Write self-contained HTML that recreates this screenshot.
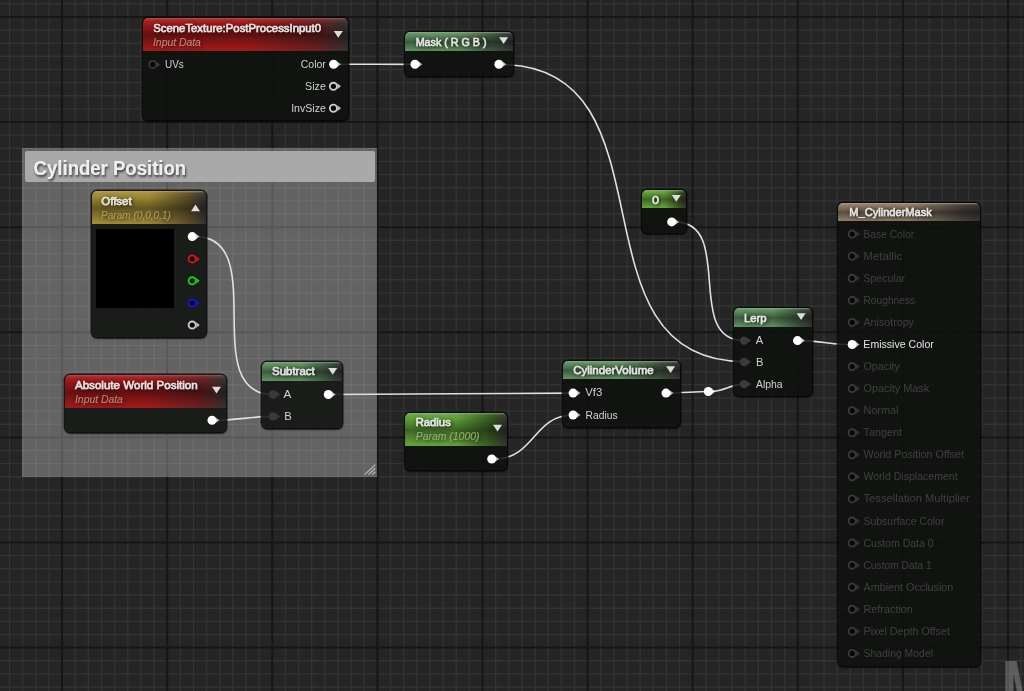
<!DOCTYPE html>
<html><head><meta charset="utf-8"><style>
html,body{margin:0;padding:0;width:1024px;height:691px;overflow:hidden;background:#252525;}
.layer{position:absolute;left:0;top:0;width:1024px;height:691px;}
.node{position:absolute;background:rgba(13,16,13,0.86);border-radius:5px;box-shadow:0 0 0 1.4px rgba(6,6,6,0.8),0.5px 1.5px 2px rgba(0,0,0,0.5);overflow:hidden;}
.hdr{position:absolute;left:0;top:0;right:0;}
.comment{position:absolute;left:22.4px;top:148.3px;width:354.5px;height:328.5px;background:rgba(255,255,255,0.285);}
.ctitle{position:absolute;left:2.5px;top:2.6px;right:1.6px;height:30.8px;background:#a9a9a9;border-radius:2px;}
svg text{font-family:"Liberation Sans",sans-serif;}
.tl{will-change:transform;}
</style></head><body>
<svg class="layer" width="1024" height="691" viewBox="0 0 1024 691">
<rect width="1024" height="691" fill="#252525"/>
<line x1="9.55" y1="0" x2="9.55" y2="691" stroke="#333333" stroke-width="1.4"/>
<line x1="22.69" y1="0" x2="22.69" y2="691" stroke="#333333" stroke-width="1.4"/>
<line x1="35.83" y1="0" x2="35.83" y2="691" stroke="#333333" stroke-width="1.4"/>
<line x1="48.96" y1="0" x2="48.96" y2="691" stroke="#333333" stroke-width="1.4"/>
<line x1="75.24" y1="0" x2="75.24" y2="691" stroke="#333333" stroke-width="1.4"/>
<line x1="88.38" y1="0" x2="88.38" y2="691" stroke="#333333" stroke-width="1.4"/>
<line x1="101.51" y1="0" x2="101.51" y2="691" stroke="#333333" stroke-width="1.4"/>
<line x1="114.65" y1="0" x2="114.65" y2="691" stroke="#333333" stroke-width="1.4"/>
<line x1="127.79" y1="0" x2="127.79" y2="691" stroke="#333333" stroke-width="1.4"/>
<line x1="140.92" y1="0" x2="140.92" y2="691" stroke="#333333" stroke-width="1.4"/>
<line x1="154.06" y1="0" x2="154.06" y2="691" stroke="#333333" stroke-width="1.4"/>
<line x1="180.34" y1="0" x2="180.34" y2="691" stroke="#333333" stroke-width="1.4"/>
<line x1="193.47" y1="0" x2="193.47" y2="691" stroke="#333333" stroke-width="1.4"/>
<line x1="206.61" y1="0" x2="206.61" y2="691" stroke="#333333" stroke-width="1.4"/>
<line x1="219.75" y1="0" x2="219.75" y2="691" stroke="#333333" stroke-width="1.4"/>
<line x1="232.89" y1="0" x2="232.89" y2="691" stroke="#333333" stroke-width="1.4"/>
<line x1="246.02" y1="0" x2="246.02" y2="691" stroke="#333333" stroke-width="1.4"/>
<line x1="259.16" y1="0" x2="259.16" y2="691" stroke="#333333" stroke-width="1.4"/>
<line x1="285.44" y1="0" x2="285.44" y2="691" stroke="#333333" stroke-width="1.4"/>
<line x1="298.57" y1="0" x2="298.57" y2="691" stroke="#333333" stroke-width="1.4"/>
<line x1="311.71" y1="0" x2="311.71" y2="691" stroke="#333333" stroke-width="1.4"/>
<line x1="324.85" y1="0" x2="324.85" y2="691" stroke="#333333" stroke-width="1.4"/>
<line x1="337.99" y1="0" x2="337.99" y2="691" stroke="#333333" stroke-width="1.4"/>
<line x1="351.12" y1="0" x2="351.12" y2="691" stroke="#333333" stroke-width="1.4"/>
<line x1="364.26" y1="0" x2="364.26" y2="691" stroke="#333333" stroke-width="1.4"/>
<line x1="390.54" y1="0" x2="390.54" y2="691" stroke="#333333" stroke-width="1.4"/>
<line x1="403.68" y1="0" x2="403.68" y2="691" stroke="#333333" stroke-width="1.4"/>
<line x1="416.81" y1="0" x2="416.81" y2="691" stroke="#333333" stroke-width="1.4"/>
<line x1="429.95" y1="0" x2="429.95" y2="691" stroke="#333333" stroke-width="1.4"/>
<line x1="443.09" y1="0" x2="443.09" y2="691" stroke="#333333" stroke-width="1.4"/>
<line x1="456.23" y1="0" x2="456.23" y2="691" stroke="#333333" stroke-width="1.4"/>
<line x1="469.36" y1="0" x2="469.36" y2="691" stroke="#333333" stroke-width="1.4"/>
<line x1="495.64" y1="0" x2="495.64" y2="691" stroke="#333333" stroke-width="1.4"/>
<line x1="508.77" y1="0" x2="508.77" y2="691" stroke="#333333" stroke-width="1.4"/>
<line x1="521.91" y1="0" x2="521.91" y2="691" stroke="#333333" stroke-width="1.4"/>
<line x1="535.05" y1="0" x2="535.05" y2="691" stroke="#333333" stroke-width="1.4"/>
<line x1="548.19" y1="0" x2="548.19" y2="691" stroke="#333333" stroke-width="1.4"/>
<line x1="561.32" y1="0" x2="561.32" y2="691" stroke="#333333" stroke-width="1.4"/>
<line x1="574.46" y1="0" x2="574.46" y2="691" stroke="#333333" stroke-width="1.4"/>
<line x1="600.74" y1="0" x2="600.74" y2="691" stroke="#333333" stroke-width="1.4"/>
<line x1="613.88" y1="0" x2="613.88" y2="691" stroke="#333333" stroke-width="1.4"/>
<line x1="627.01" y1="0" x2="627.01" y2="691" stroke="#333333" stroke-width="1.4"/>
<line x1="640.15" y1="0" x2="640.15" y2="691" stroke="#333333" stroke-width="1.4"/>
<line x1="653.29" y1="0" x2="653.29" y2="691" stroke="#333333" stroke-width="1.4"/>
<line x1="666.42" y1="0" x2="666.42" y2="691" stroke="#333333" stroke-width="1.4"/>
<line x1="679.56" y1="0" x2="679.56" y2="691" stroke="#333333" stroke-width="1.4"/>
<line x1="705.84" y1="0" x2="705.84" y2="691" stroke="#333333" stroke-width="1.4"/>
<line x1="718.98" y1="0" x2="718.98" y2="691" stroke="#333333" stroke-width="1.4"/>
<line x1="732.11" y1="0" x2="732.11" y2="691" stroke="#333333" stroke-width="1.4"/>
<line x1="745.25" y1="0" x2="745.25" y2="691" stroke="#333333" stroke-width="1.4"/>
<line x1="758.39" y1="0" x2="758.39" y2="691" stroke="#333333" stroke-width="1.4"/>
<line x1="771.52" y1="0" x2="771.52" y2="691" stroke="#333333" stroke-width="1.4"/>
<line x1="784.66" y1="0" x2="784.66" y2="691" stroke="#333333" stroke-width="1.4"/>
<line x1="810.94" y1="0" x2="810.94" y2="691" stroke="#333333" stroke-width="1.4"/>
<line x1="824.07" y1="0" x2="824.07" y2="691" stroke="#333333" stroke-width="1.4"/>
<line x1="837.21" y1="0" x2="837.21" y2="691" stroke="#333333" stroke-width="1.4"/>
<line x1="850.35" y1="0" x2="850.35" y2="691" stroke="#333333" stroke-width="1.4"/>
<line x1="863.49" y1="0" x2="863.49" y2="691" stroke="#333333" stroke-width="1.4"/>
<line x1="876.62" y1="0" x2="876.62" y2="691" stroke="#333333" stroke-width="1.4"/>
<line x1="889.76" y1="0" x2="889.76" y2="691" stroke="#333333" stroke-width="1.4"/>
<line x1="916.04" y1="0" x2="916.04" y2="691" stroke="#333333" stroke-width="1.4"/>
<line x1="929.17" y1="0" x2="929.17" y2="691" stroke="#333333" stroke-width="1.4"/>
<line x1="942.31" y1="0" x2="942.31" y2="691" stroke="#333333" stroke-width="1.4"/>
<line x1="955.45" y1="0" x2="955.45" y2="691" stroke="#333333" stroke-width="1.4"/>
<line x1="968.59" y1="0" x2="968.59" y2="691" stroke="#333333" stroke-width="1.4"/>
<line x1="981.73" y1="0" x2="981.73" y2="691" stroke="#333333" stroke-width="1.4"/>
<line x1="994.86" y1="0" x2="994.86" y2="691" stroke="#333333" stroke-width="1.4"/>
<line x1="1021.14" y1="0" x2="1021.14" y2="691" stroke="#333333" stroke-width="1.4"/>
<line x1="0" y1="3.76" x2="1024" y2="3.76" stroke="#333333" stroke-width="1.4"/>
<line x1="0" y1="30.04" x2="1024" y2="30.04" stroke="#333333" stroke-width="1.4"/>
<line x1="0" y1="43.18" x2="1024" y2="43.18" stroke="#333333" stroke-width="1.4"/>
<line x1="0" y1="56.32" x2="1024" y2="56.32" stroke="#333333" stroke-width="1.4"/>
<line x1="0" y1="69.46" x2="1024" y2="69.46" stroke="#333333" stroke-width="1.4"/>
<line x1="0" y1="82.60" x2="1024" y2="82.60" stroke="#333333" stroke-width="1.4"/>
<line x1="0" y1="95.74" x2="1024" y2="95.74" stroke="#333333" stroke-width="1.4"/>
<line x1="0" y1="108.88" x2="1024" y2="108.88" stroke="#333333" stroke-width="1.4"/>
<line x1="0" y1="135.16" x2="1024" y2="135.16" stroke="#333333" stroke-width="1.4"/>
<line x1="0" y1="148.30" x2="1024" y2="148.30" stroke="#333333" stroke-width="1.4"/>
<line x1="0" y1="161.44" x2="1024" y2="161.44" stroke="#333333" stroke-width="1.4"/>
<line x1="0" y1="174.58" x2="1024" y2="174.58" stroke="#333333" stroke-width="1.4"/>
<line x1="0" y1="187.72" x2="1024" y2="187.72" stroke="#333333" stroke-width="1.4"/>
<line x1="0" y1="200.86" x2="1024" y2="200.86" stroke="#333333" stroke-width="1.4"/>
<line x1="0" y1="214.00" x2="1024" y2="214.00" stroke="#333333" stroke-width="1.4"/>
<line x1="0" y1="240.28" x2="1024" y2="240.28" stroke="#333333" stroke-width="1.4"/>
<line x1="0" y1="253.42" x2="1024" y2="253.42" stroke="#333333" stroke-width="1.4"/>
<line x1="0" y1="266.56" x2="1024" y2="266.56" stroke="#333333" stroke-width="1.4"/>
<line x1="0" y1="279.70" x2="1024" y2="279.70" stroke="#333333" stroke-width="1.4"/>
<line x1="0" y1="292.84" x2="1024" y2="292.84" stroke="#333333" stroke-width="1.4"/>
<line x1="0" y1="305.98" x2="1024" y2="305.98" stroke="#333333" stroke-width="1.4"/>
<line x1="0" y1="319.12" x2="1024" y2="319.12" stroke="#333333" stroke-width="1.4"/>
<line x1="0" y1="345.40" x2="1024" y2="345.40" stroke="#333333" stroke-width="1.4"/>
<line x1="0" y1="358.54" x2="1024" y2="358.54" stroke="#333333" stroke-width="1.4"/>
<line x1="0" y1="371.68" x2="1024" y2="371.68" stroke="#333333" stroke-width="1.4"/>
<line x1="0" y1="384.82" x2="1024" y2="384.82" stroke="#333333" stroke-width="1.4"/>
<line x1="0" y1="397.96" x2="1024" y2="397.96" stroke="#333333" stroke-width="1.4"/>
<line x1="0" y1="411.10" x2="1024" y2="411.10" stroke="#333333" stroke-width="1.4"/>
<line x1="0" y1="424.24" x2="1024" y2="424.24" stroke="#333333" stroke-width="1.4"/>
<line x1="0" y1="450.52" x2="1024" y2="450.52" stroke="#333333" stroke-width="1.4"/>
<line x1="0" y1="463.66" x2="1024" y2="463.66" stroke="#333333" stroke-width="1.4"/>
<line x1="0" y1="476.80" x2="1024" y2="476.80" stroke="#333333" stroke-width="1.4"/>
<line x1="0" y1="489.94" x2="1024" y2="489.94" stroke="#333333" stroke-width="1.4"/>
<line x1="0" y1="503.08" x2="1024" y2="503.08" stroke="#333333" stroke-width="1.4"/>
<line x1="0" y1="516.22" x2="1024" y2="516.22" stroke="#333333" stroke-width="1.4"/>
<line x1="0" y1="529.36" x2="1024" y2="529.36" stroke="#333333" stroke-width="1.4"/>
<line x1="0" y1="555.64" x2="1024" y2="555.64" stroke="#333333" stroke-width="1.4"/>
<line x1="0" y1="568.78" x2="1024" y2="568.78" stroke="#333333" stroke-width="1.4"/>
<line x1="0" y1="581.92" x2="1024" y2="581.92" stroke="#333333" stroke-width="1.4"/>
<line x1="0" y1="595.06" x2="1024" y2="595.06" stroke="#333333" stroke-width="1.4"/>
<line x1="0" y1="608.20" x2="1024" y2="608.20" stroke="#333333" stroke-width="1.4"/>
<line x1="0" y1="621.34" x2="1024" y2="621.34" stroke="#333333" stroke-width="1.4"/>
<line x1="0" y1="634.48" x2="1024" y2="634.48" stroke="#333333" stroke-width="1.4"/>
<line x1="0" y1="660.76" x2="1024" y2="660.76" stroke="#333333" stroke-width="1.4"/>
<line x1="0" y1="673.90" x2="1024" y2="673.90" stroke="#333333" stroke-width="1.4"/>
<line x1="0" y1="687.04" x2="1024" y2="687.04" stroke="#333333" stroke-width="1.4"/>
<line x1="62.10" y1="0" x2="62.10" y2="691" stroke="#161616" stroke-width="2"/>
<line x1="167.20" y1="0" x2="167.20" y2="691" stroke="#161616" stroke-width="2"/>
<line x1="272.30" y1="0" x2="272.30" y2="691" stroke="#161616" stroke-width="2"/>
<line x1="377.40" y1="0" x2="377.40" y2="691" stroke="#161616" stroke-width="2"/>
<line x1="482.50" y1="0" x2="482.50" y2="691" stroke="#161616" stroke-width="2"/>
<line x1="587.60" y1="0" x2="587.60" y2="691" stroke="#161616" stroke-width="2"/>
<line x1="692.70" y1="0" x2="692.70" y2="691" stroke="#161616" stroke-width="2"/>
<line x1="797.80" y1="0" x2="797.80" y2="691" stroke="#161616" stroke-width="2"/>
<line x1="902.90" y1="0" x2="902.90" y2="691" stroke="#161616" stroke-width="2"/>
<line x1="1008.00" y1="0" x2="1008.00" y2="691" stroke="#161616" stroke-width="2"/>
<line x1="0" y1="16.90" x2="1024" y2="16.90" stroke="#161616" stroke-width="2"/>
<line x1="0" y1="122.02" x2="1024" y2="122.02" stroke="#161616" stroke-width="2"/>
<line x1="0" y1="227.14" x2="1024" y2="227.14" stroke="#161616" stroke-width="2"/>
<line x1="0" y1="332.26" x2="1024" y2="332.26" stroke="#161616" stroke-width="2"/>
<line x1="0" y1="437.38" x2="1024" y2="437.38" stroke="#161616" stroke-width="2"/>
<line x1="0" y1="542.50" x2="1024" y2="542.50" stroke="#161616" stroke-width="2"/>
<line x1="0" y1="647.62" x2="1024" y2="647.62" stroke="#161616" stroke-width="2"/>
</svg>
<div class="comment"><div class="ctitle"></div></div>
<svg class="layer tl" width="1024" height="691" viewBox="0 0 1024 691">
<defs>
<filter id="csh" x="-10%" y="-30%" width="120%" height="160%"><feGaussianBlur in="SourceAlpha" stdDeviation="0.8"/><feOffset dx="1.4" dy="1.6" result="o"/><feFlood flood-color="#202020" flood-opacity="0.8"/><feComposite in2="o" operator="in"/><feMerge><feMergeNode/><feMergeNode in="SourceGraphic"/></feMerge></filter>
</defs>
<text x="33.6" y="174.7" font-size="19.6" font-weight="bold" fill="#efefef" textLength="152.6" lengthAdjust="spacingAndGlyphs" filter="url(#csh)">Cylinder Position</text>
<path d="M364.6,474.6 L375.3,464.6 M368.4,474.6 L375.3,468.2 M372.2,474.6 L375.3,471.7" stroke="#bcbcbc" stroke-width="1.2"/>
<g fill="none" stroke="#e0e0e0" stroke-width="1.6">
<path d="M336.9,64.2 C362.3,64.2 389.8,64.4 415.2,64.4"/><path d="M501.0,64.6 C681.0,64.6 564.0,361.6 744.0,361.6"/><path d="M674.7,221.9 C735.5,221.9 683.2,340.6 744.0,340.6"/><path d="M195.2,236.6 C271.4,236.6 196.8,394.5 273.0,394.5"/><path d="M215.0,420.3 C235.0,420.3 253.0,416.4 273.0,416.4"/><path d="M331.3,394.5 C409.9,394.5 494.5,393.1 573.1,393.1"/><path d="M494.7,459.0 C534.3,459.0 533.5,415.0 573.1,415.0"/><path d="M669.0,393.1 C682.2,393.1 695.1,391.5 708.3,391.5"/><path d="M711.3,391.5 C724.3,391.5 731.0,384.1 744.0,384.1"/><path d="M800.5,340.6 C818.6,340.6 834.1,344.9 852.2,344.9"/>
</g>
</svg>
<div class="layer">
<div class="node" style="left:142.5px;top:18.3px;width:205.8px;height:101.7px"><div class="hdr" style="height:33.2px;box-shadow:inset 0 1.3px 0 #c8585880;background:linear-gradient(180deg,rgba(255,255,255,0.1) 0,rgba(0,0,0,0) 16%,rgba(0,0,0,0.36) 52%,rgba(0,0,0,0.16) 76%,rgba(0,0,0,0) 94%),linear-gradient(90deg,#a01a1a 0%,#a01a1a 50%,#662020 86%,#323232 100%)"></div></div><div class="node" style="left:405.2px;top:31.6px;width:108.1px;height:44.0px"><div class="hdr" style="height:19.4px;box-shadow:inset 0 1.3px 0 #90b09080;background:linear-gradient(180deg,rgba(255,255,255,0.1) 0,rgba(0,0,0,0) 16%,rgba(0,0,0,0.36) 52%,rgba(0,0,0,0.16) 76%,rgba(0,0,0,0) 94%),linear-gradient(90deg,#5f8e5f 0%,#5f8e5f 50%,#3a4a3a 86%,#323232 100%)"></div></div><div class="node" style="left:91.8px;top:190.9px;width:114.7px;height:146.3px"><div class="hdr" style="height:33.5px;box-shadow:inset 0 1.3px 0 #c8b07080;background:linear-gradient(180deg,rgba(255,255,255,0.1) 0,rgba(0,0,0,0) 16%,rgba(0,0,0,0.36) 52%,rgba(0,0,0,0.16) 76%,rgba(0,0,0,0) 94%),linear-gradient(90deg,#a08a34 0%,#a08a34 50%,#584a26 86%,#323232 100%)"></div><div style="position:absolute;left:4.1px;top:38.1px;width:78.5px;height:79.1px;background:#000"></div></div><div class="node" style="left:65.2px;top:374.8px;width:161.2px;height:57.7px"><div class="hdr" style="height:33.5px;box-shadow:inset 0 1.3px 0 #c8585880;background:linear-gradient(180deg,rgba(255,255,255,0.1) 0,rgba(0,0,0,0) 16%,rgba(0,0,0,0.36) 52%,rgba(0,0,0,0.16) 76%,rgba(0,0,0,0) 94%),linear-gradient(90deg,#a01a1a 0%,#a01a1a 50%,#662020 86%,#323232 100%)"></div></div><div class="node" style="left:261.8px;top:361.9px;width:80.5px;height:66.4px"><div class="hdr" style="height:19.1px;box-shadow:inset 0 1.3px 0 #90b09080;background:linear-gradient(180deg,rgba(255,255,255,0.1) 0,rgba(0,0,0,0) 16%,rgba(0,0,0,0.36) 52%,rgba(0,0,0,0.16) 76%,rgba(0,0,0,0) 94%),linear-gradient(90deg,#5f8e5f 0%,#5f8e5f 50%,#3a4a3a 86%,#323232 100%)"></div></div><div class="node" style="left:405.4px;top:412.8px;width:101.5px;height:57.3px"><div class="hdr" style="height:33.3px;box-shadow:inset 0 1.3px 0 #90c07080;background:linear-gradient(180deg,rgba(255,255,255,0.1) 0,rgba(0,0,0,0) 16%,rgba(0,0,0,0.36) 52%,rgba(0,0,0,0.16) 76%,rgba(0,0,0,0) 94%),linear-gradient(90deg,#62a03a 0%,#62a03a 50%,#33541f 86%,#323232 100%)"></div></div><div class="node" style="left:562.5px;top:360.6px;width:117.5px;height:66.2px"><div class="hdr" style="height:18.7px;box-shadow:inset 0 1.3px 0 #90b09080;background:linear-gradient(180deg,rgba(255,255,255,0.1) 0,rgba(0,0,0,0) 16%,rgba(0,0,0,0.36) 52%,rgba(0,0,0,0.16) 76%,rgba(0,0,0,0) 94%),linear-gradient(90deg,#5f8e5f 0%,#5f8e5f 50%,#3a4a3a 86%,#323232 100%)"></div></div><div class="node" style="left:642.0px;top:190.2px;width:43.7px;height:43.3px"><div class="hdr" style="height:18.1px;box-shadow:inset 0 1.3px 0 #90c07080;background:linear-gradient(180deg,rgba(255,255,255,0.1) 0,rgba(0,0,0,0) 16%,rgba(0,0,0,0.36) 52%,rgba(0,0,0,0.16) 76%,rgba(0,0,0,0) 94%),linear-gradient(90deg,#62a03a 0%,#62a03a 50%,#33541f 86%,#323232 100%)"></div></div><div class="node" style="left:733.7px;top:308.3px;width:78.4px;height:87.7px"><div class="hdr" style="height:18.4px;box-shadow:inset 0 1.3px 0 #90b09080;background:linear-gradient(180deg,rgba(255,255,255,0.1) 0,rgba(0,0,0,0) 16%,rgba(0,0,0,0.36) 52%,rgba(0,0,0,0.16) 76%,rgba(0,0,0,0) 94%),linear-gradient(90deg,#5f8e5f 0%,#5f8e5f 50%,#3a4a3a 86%,#323232 100%)"></div></div><div class="node" style="left:838.0px;top:202.6px;width:141.5px;height:463.4px"><div class="hdr" style="height:18.2px;box-shadow:inset 0 1.3px 0 #b8a89880;background:linear-gradient(180deg,rgba(255,255,255,0.1) 0,rgba(0,0,0,0) 16%,rgba(0,0,0,0.36) 52%,rgba(0,0,0,0.16) 76%,rgba(0,0,0,0) 94%),linear-gradient(90deg,#8c7a66 0%,#8c7a66 50%,#48403a 86%,#323232 100%)"></div></div>
</div>
<svg class="layer tl" width="1024" height="691" viewBox="0 0 1024 691">
<defs>
<filter id="tsh" x="-20%" y="-60%" width="140%" height="220%"><feGaussianBlur in="SourceAlpha" stdDeviation="2.2"/><feOffset dx="0.5" dy="1" result="o"/><feFlood flood-color="#000" flood-opacity="0.8"/><feComposite in2="o" operator="in"/><feMerge><feMergeNode/><feMergeNode in="SourceGraphic"/></feMerge></filter>
</defs>
<circle cx="152.7" cy="64.4" r="3.55" fill="#070707" stroke="#383838" stroke-width="1.9"/><path d="M156.79999999999998,61.400000000000006 L160.29999999999998,64.4 L156.79999999999998,67.4Z" fill="#383838" opacity="0.9"/><circle cx="333.6" cy="64.2" r="4.5" fill="#ffffff"/><path d="M337.20000000000005,61.400000000000006 L341.0,64.2 L337.20000000000005,67.0Z" fill="#ffffff" opacity="0.7"/><circle cx="333.4" cy="86.3" r="3.55" fill="#070707" stroke="#cccccc" stroke-width="1.9"/><path d="M337.5,83.3 L341.0,86.3 L337.5,89.3Z" fill="#cccccc" opacity="0.9"/><circle cx="333.4" cy="108.2" r="3.55" fill="#070707" stroke="#cccccc" stroke-width="1.9"/><path d="M337.5,105.2 L341.0,108.2 L337.5,111.2Z" fill="#cccccc" opacity="0.9"/><circle cx="415.0" cy="64.3" r="4.5" fill="#ffffff"/><path d="M418.6,61.5 L422.4,64.3 L418.6,67.1Z" fill="#ffffff" opacity="0.7"/><circle cx="498.9" cy="64.2" r="4.5" fill="#ffffff"/><path d="M502.5,61.400000000000006 L506.29999999999995,64.2 L502.5,67.0Z" fill="#ffffff" opacity="0.7"/><circle cx="192.2" cy="236.6" r="4.5" fill="#ffffff"/><path d="M195.79999999999998,233.79999999999998 L199.6,236.6 L195.79999999999998,239.4Z" fill="#ffffff" opacity="0.7"/><circle cx="192.2" cy="258.9" r="3.55" fill="#070707" stroke="#e01414" stroke-width="1.9"/><path d="M196.29999999999998,255.89999999999998 L199.79999999999998,258.9 L196.29999999999998,261.9Z" fill="#e01414" opacity="0.9"/><circle cx="192.2" cy="280.8" r="3.55" fill="#070707" stroke="#14d414" stroke-width="1.9"/><path d="M196.29999999999998,277.8 L199.79999999999998,280.8 L196.29999999999998,283.8Z" fill="#14d414" opacity="0.9"/><circle cx="192.2" cy="303.0" r="3.55" fill="#070707" stroke="#1414e0" stroke-width="1.9"/><path d="M196.29999999999998,300.0 L199.79999999999998,303.0 L196.29999999999998,306.0Z" fill="#1414e0" opacity="0.9"/><circle cx="192.2" cy="325.0" r="3.55" fill="#070707" stroke="#c8c8c8" stroke-width="1.9"/><path d="M196.29999999999998,322.0 L199.79999999999998,325.0 L196.29999999999998,328.0Z" fill="#c8c8c8" opacity="0.9"/><circle cx="212.0" cy="420.3" r="4.5" fill="#ffffff"/><path d="M215.6,417.5 L219.4,420.3 L215.6,423.1Z" fill="#ffffff" opacity="0.7"/><circle cx="273.0" cy="394.5" r="4.2" fill="#3a3a3a"/><path d="M276.0,391.5 L280.2,394.5 L276.0,397.5Z" fill="#3a3a3a"/><circle cx="273.0" cy="416.4" r="4.2" fill="#3a3a3a"/><path d="M276.0,413.4 L280.2,416.4 L276.0,419.4Z" fill="#3a3a3a"/><circle cx="328.3" cy="394.5" r="4.5" fill="#ffffff"/><path d="M331.90000000000003,391.7 L335.7,394.5 L331.90000000000003,397.3Z" fill="#ffffff" opacity="0.7"/><circle cx="491.7" cy="459.0" r="4.5" fill="#ffffff"/><path d="M495.3,456.2 L499.09999999999997,459.0 L495.3,461.8Z" fill="#ffffff" opacity="0.7"/><circle cx="573.1" cy="393.1" r="4.5" fill="#ffffff"/><path d="M576.7,390.3 L580.5,393.1 L576.7,395.90000000000003Z" fill="#ffffff" opacity="0.7"/><circle cx="573.1" cy="415.0" r="4.5" fill="#ffffff"/><path d="M576.7,412.2 L580.5,415.0 L576.7,417.8Z" fill="#ffffff" opacity="0.7"/><circle cx="666.0" cy="393.1" r="4.5" fill="#ffffff"/><path d="M669.6,390.3 L673.4,393.1 L669.6,395.90000000000003Z" fill="#ffffff" opacity="0.7"/><circle cx="671.7" cy="221.9" r="4.5" fill="#ffffff"/><path d="M675.3000000000001,219.1 L679.1,221.9 L675.3000000000001,224.70000000000002Z" fill="#ffffff" opacity="0.7"/><circle cx="744.0" cy="340.6" r="4.2" fill="#3a3a3a"/><path d="M747.0,337.6 L751.2,340.6 L747.0,343.6Z" fill="#3a3a3a"/><circle cx="744.0" cy="362.0" r="4.2" fill="#3a3a3a"/><path d="M747.0,359.0 L751.2,362.0 L747.0,365.0Z" fill="#3a3a3a"/><circle cx="744.0" cy="384.1" r="4.2" fill="#3a3a3a"/><path d="M747.0,381.1 L751.2,384.1 L747.0,387.1Z" fill="#3a3a3a"/><circle cx="797.5" cy="340.6" r="4.5" fill="#ffffff"/><path d="M801.1,337.8 L804.9,340.6 L801.1,343.40000000000003Z" fill="#ffffff" opacity="0.7"/><circle cx="852.2" cy="234.1" r="3.55" fill="#070707" stroke="#3a3a3a" stroke-width="1.9"/><path d="M856.3000000000001,231.1 L859.8000000000001,234.1 L856.3000000000001,237.1Z" fill="#3a3a3a" opacity="0.9"/><circle cx="852.2" cy="256.17" r="3.55" fill="#070707" stroke="#3a3a3a" stroke-width="1.9"/><path d="M856.3000000000001,253.17000000000002 L859.8000000000001,256.17 L856.3000000000001,259.17Z" fill="#3a3a3a" opacity="0.9"/><circle cx="852.2" cy="278.24" r="3.55" fill="#070707" stroke="#3a3a3a" stroke-width="1.9"/><path d="M856.3000000000001,275.24 L859.8000000000001,278.24 L856.3000000000001,281.24Z" fill="#3a3a3a" opacity="0.9"/><circle cx="852.2" cy="300.31" r="3.55" fill="#070707" stroke="#3a3a3a" stroke-width="1.9"/><path d="M856.3000000000001,297.31 L859.8000000000001,300.31 L856.3000000000001,303.31Z" fill="#3a3a3a" opacity="0.9"/><circle cx="852.2" cy="322.38" r="3.55" fill="#070707" stroke="#3a3a3a" stroke-width="1.9"/><path d="M856.3000000000001,319.38 L859.8000000000001,322.38 L856.3000000000001,325.38Z" fill="#3a3a3a" opacity="0.9"/><circle cx="852.2" cy="344.45" r="4.5" fill="#ffffff"/><path d="M855.8000000000001,341.65 L859.6,344.45 L855.8000000000001,347.25Z" fill="#ffffff" opacity="0.7"/><circle cx="852.2" cy="366.52" r="3.55" fill="#070707" stroke="#3a3a3a" stroke-width="1.9"/><path d="M856.3000000000001,363.52 L859.8000000000001,366.52 L856.3000000000001,369.52Z" fill="#3a3a3a" opacity="0.9"/><circle cx="852.2" cy="388.59000000000003" r="3.55" fill="#070707" stroke="#3a3a3a" stroke-width="1.9"/><path d="M856.3000000000001,385.59000000000003 L859.8000000000001,388.59000000000003 L856.3000000000001,391.59000000000003Z" fill="#3a3a3a" opacity="0.9"/><circle cx="852.2" cy="410.65999999999997" r="3.55" fill="#070707" stroke="#3a3a3a" stroke-width="1.9"/><path d="M856.3000000000001,407.65999999999997 L859.8000000000001,410.65999999999997 L856.3000000000001,413.65999999999997Z" fill="#3a3a3a" opacity="0.9"/><circle cx="852.2" cy="432.73" r="3.55" fill="#070707" stroke="#3a3a3a" stroke-width="1.9"/><path d="M856.3000000000001,429.73 L859.8000000000001,432.73 L856.3000000000001,435.73Z" fill="#3a3a3a" opacity="0.9"/><circle cx="852.2" cy="454.79999999999995" r="3.55" fill="#070707" stroke="#3a3a3a" stroke-width="1.9"/><path d="M856.3000000000001,451.79999999999995 L859.8000000000001,454.79999999999995 L856.3000000000001,457.79999999999995Z" fill="#3a3a3a" opacity="0.9"/><circle cx="852.2" cy="476.87" r="3.55" fill="#070707" stroke="#3a3a3a" stroke-width="1.9"/><path d="M856.3000000000001,473.87 L859.8000000000001,476.87 L856.3000000000001,479.87Z" fill="#3a3a3a" opacity="0.9"/><circle cx="852.2" cy="498.94000000000005" r="3.55" fill="#070707" stroke="#3a3a3a" stroke-width="1.9"/><path d="M856.3000000000001,495.94000000000005 L859.8000000000001,498.94000000000005 L856.3000000000001,501.94000000000005Z" fill="#3a3a3a" opacity="0.9"/><circle cx="852.2" cy="521.01" r="3.55" fill="#070707" stroke="#3a3a3a" stroke-width="1.9"/><path d="M856.3000000000001,518.01 L859.8000000000001,521.01 L856.3000000000001,524.01Z" fill="#3a3a3a" opacity="0.9"/><circle cx="852.2" cy="543.08" r="3.55" fill="#070707" stroke="#3a3a3a" stroke-width="1.9"/><path d="M856.3000000000001,540.08 L859.8000000000001,543.08 L856.3000000000001,546.08Z" fill="#3a3a3a" opacity="0.9"/><circle cx="852.2" cy="565.15" r="3.55" fill="#070707" stroke="#3a3a3a" stroke-width="1.9"/><path d="M856.3000000000001,562.15 L859.8000000000001,565.15 L856.3000000000001,568.15Z" fill="#3a3a3a" opacity="0.9"/><circle cx="852.2" cy="587.22" r="3.55" fill="#070707" stroke="#3a3a3a" stroke-width="1.9"/><path d="M856.3000000000001,584.22 L859.8000000000001,587.22 L856.3000000000001,590.22Z" fill="#3a3a3a" opacity="0.9"/><circle cx="852.2" cy="609.29" r="3.55" fill="#070707" stroke="#3a3a3a" stroke-width="1.9"/><path d="M856.3000000000001,606.29 L859.8000000000001,609.29 L856.3000000000001,612.29Z" fill="#3a3a3a" opacity="0.9"/><circle cx="852.2" cy="631.36" r="3.55" fill="#070707" stroke="#3a3a3a" stroke-width="1.9"/><path d="M856.3000000000001,628.36 L859.8000000000001,631.36 L856.3000000000001,634.36Z" fill="#3a3a3a" opacity="0.9"/><circle cx="852.2" cy="653.43" r="3.55" fill="#070707" stroke="#3a3a3a" stroke-width="1.9"/><path d="M856.3000000000001,650.43 L859.8000000000001,653.43 L856.3000000000001,656.43Z" fill="#3a3a3a" opacity="0.9"/><circle cx="708.3" cy="391.5" r="4.5" fill="#ffffff"/><path d="M711.9,388.7 L715.6999999999999,391.5 L711.9,394.3Z" fill="#ffffff" opacity="0.7"/>
<path d="M333.8,30.999999999999996 L342.8,30.999999999999996 L338.3,37.8Z" fill="#dcdcdc"/><path d="M499.1,37.2 L508.1,37.2 L503.6,44.0Z" fill="#dcdcdc"/><path d="M191.0,211.3 L200.0,211.3 L195.5,204.5Z" fill="#dcdcdc"/><path d="M212.0,386.7 L221.0,386.7 L216.5,393.5Z" fill="#dcdcdc"/><path d="M328.2,368.0 L337.2,368.0 L332.7,374.8Z" fill="#dcdcdc"/><path d="M493.0,424.7 L502.0,424.7 L497.5,431.5Z" fill="#dcdcdc"/><path d="M666.1,366.2 L675.1,366.2 L670.6,373.0Z" fill="#dcdcdc"/><path d="M671.8,195.0 L680.8,195.0 L676.3,201.8Z" fill="#dcdcdc"/><path d="M796.6,313.3 L805.6,313.3 L801.1,320.1Z" fill="#dcdcdc"/>
<text x="153.19" y="31.60" font-size="11.2" fill="#e6e6e6" font-weight="normal" font-style="normal" textLength="167.87" lengthAdjust="spacingAndGlyphs" filter="url(#tsh)" stroke="#e6e6e6" stroke-width="0.5">SceneTexture:PostProcessInput0</text>
<text x="152.99" y="45.70" font-size="10.2" fill="#c08a74" font-weight="normal" font-style="italic" textLength="47.92" lengthAdjust="spacingAndGlyphs" filter="url(#tsh)">Input Data</text>
<text x="164.99" y="67.90" font-size="10.3" fill="#d2d2d2" font-weight="normal" font-style="normal" textLength="18.83" lengthAdjust="spacingAndGlyphs">UVs</text>
<text x="300.79" y="67.70" font-size="10.3" fill="#d2d2d2" font-weight="normal" font-style="normal" textLength="25.03" lengthAdjust="spacingAndGlyphs">Color</text>
<text x="305.09" y="89.90" font-size="10.3" fill="#d2d2d2" font-weight="normal" font-style="normal" textLength="20.73" lengthAdjust="spacingAndGlyphs">Size</text>
<text x="291.19" y="111.60" font-size="10.3" fill="#d2d2d2" font-weight="normal" font-style="normal" textLength="34.63" lengthAdjust="spacingAndGlyphs">InvSize</text>
<text x="415.64" y="45.90" font-size="11.2" fill="#e6e6e6" font-weight="normal" font-style="normal" textLength="70.92" lengthAdjust="spacingAndGlyphs" filter="url(#tsh)" stroke="#e6e6e6" stroke-width="0.5">Mask ( R G B )</text>
<text x="101.34" y="204.50" font-size="11.2" fill="#e6e6e6" font-weight="normal" font-style="normal" textLength="30.22" lengthAdjust="spacingAndGlyphs" filter="url(#tsh)" stroke="#e6e6e6" stroke-width="0.5">Offset</text>
<text x="101.09" y="218.50" font-size="10.2" fill="#a89860" font-weight="normal" font-style="italic" textLength="69.82" lengthAdjust="spacingAndGlyphs" filter="url(#tsh)">Param (0,0,0,1)</text>
<text x="74.94" y="388.60" font-size="11.2" fill="#e6e6e6" font-weight="normal" font-style="normal" textLength="122.82" lengthAdjust="spacingAndGlyphs" filter="url(#tsh)" stroke="#e6e6e6" stroke-width="0.5">Absolute World Position</text>
<text x="74.99" y="402.70" font-size="10.2" fill="#b98a72" font-weight="normal" font-style="italic" textLength="47.92" lengthAdjust="spacingAndGlyphs" filter="url(#tsh)">Input Data</text>
<text x="272.04" y="375.20" font-size="11.2" fill="#e6e6e6" font-weight="normal" font-style="normal" textLength="42.62" lengthAdjust="spacingAndGlyphs" filter="url(#tsh)" stroke="#e6e6e6" stroke-width="0.5">Subtract</text>
<text x="283.59" y="397.70" font-size="10.3" fill="#d2d2d2" font-weight="normal" font-style="normal" textLength="7.83" lengthAdjust="spacingAndGlyphs">A</text>
<text x="284.19" y="419.70" font-size="10.3" fill="#d2d2d2" font-weight="normal" font-style="normal" textLength="7.53" lengthAdjust="spacingAndGlyphs">B</text>
<text x="415.74" y="425.90" font-size="11.2" fill="#e6e6e6" font-weight="normal" font-style="normal" textLength="35.02" lengthAdjust="spacingAndGlyphs" filter="url(#tsh)" stroke="#e6e6e6" stroke-width="0.5">Radius</text>
<text x="415.69" y="439.90" font-size="10.2" fill="#94ac74" font-weight="normal" font-style="italic" textLength="63.82" lengthAdjust="spacingAndGlyphs" filter="url(#tsh)">Param (1000)</text>
<text x="573.24" y="374.30" font-size="11.2" fill="#e6e6e6" font-weight="normal" font-style="normal" textLength="80.42" lengthAdjust="spacingAndGlyphs" filter="url(#tsh)" stroke="#e6e6e6" stroke-width="0.5">CylinderVolume</text>
<text x="585.19" y="396.20" font-size="10.3" fill="#d2d2d2" font-weight="normal" font-style="normal" textLength="17.03" lengthAdjust="spacingAndGlyphs">Vf3</text>
<text x="585.49" y="418.70" font-size="10.3" fill="#d2d2d2" font-weight="normal" font-style="normal" textLength="32.13" lengthAdjust="spacingAndGlyphs">Radius</text>
<text x="652.04" y="203.90" font-size="11.2" fill="#e6e6e6" font-weight="normal" font-style="normal" textLength="7.02" lengthAdjust="spacingAndGlyphs" filter="url(#tsh)" stroke="#e6e6e6" stroke-width="0.5">0</text>
<text x="743.94" y="321.90" font-size="11.2" fill="#e6e6e6" font-weight="normal" font-style="normal" textLength="22.72" lengthAdjust="spacingAndGlyphs" filter="url(#tsh)" stroke="#e6e6e6" stroke-width="0.5">Lerp</text>
<text x="755.88" y="343.80" font-size="10.3" fill="#d2d2d2" font-weight="normal" font-style="normal" textLength="7.43" lengthAdjust="spacingAndGlyphs">A</text>
<text x="756.09" y="365.70" font-size="10.3" fill="#d2d2d2" font-weight="normal" font-style="normal" textLength="7.43" lengthAdjust="spacingAndGlyphs">B</text>
<text x="756.09" y="387.70" font-size="10.3" fill="#d2d2d2" font-weight="normal" font-style="normal" textLength="26.53" lengthAdjust="spacingAndGlyphs">Alpha</text>
<text x="849.24" y="215.70" font-size="11.2" fill="#e6e6e6" font-weight="normal" font-style="normal" textLength="82.62" lengthAdjust="spacingAndGlyphs" filter="url(#tsh)" stroke="#e6e6e6" stroke-width="0.5">M_CylinderMask</text>
<text x="863.49" y="237.60" font-size="10.3" fill="#404040" font-weight="normal" font-style="normal" textLength="50.73" lengthAdjust="spacingAndGlyphs">Base Color</text>
<text x="863.49" y="259.67" font-size="10.3" fill="#404040" font-weight="normal" font-style="normal" textLength="38.63" lengthAdjust="spacingAndGlyphs">Metallic</text>
<text x="863.49" y="281.74" font-size="10.3" fill="#404040" font-weight="normal" font-style="normal" textLength="41.53" lengthAdjust="spacingAndGlyphs">Specular</text>
<text x="863.49" y="303.81" font-size="10.3" fill="#404040" font-weight="normal" font-style="normal" textLength="51.73" lengthAdjust="spacingAndGlyphs">Roughness</text>
<text x="863.49" y="325.88" font-size="10.3" fill="#404040" font-weight="normal" font-style="normal" textLength="50.43" lengthAdjust="spacingAndGlyphs">Anisotropy</text>
<text x="863.38" y="347.75" font-size="10.3" fill="#e4e4e4" font-weight="normal" font-style="normal" textLength="70.43" lengthAdjust="spacingAndGlyphs">Emissive Color</text>
<text x="863.49" y="370.02" font-size="10.3" fill="#404040" font-weight="normal" font-style="normal" textLength="36.43" lengthAdjust="spacingAndGlyphs">Opacity</text>
<text x="863.49" y="392.09" font-size="10.3" fill="#404040" font-weight="normal" font-style="normal" textLength="65.73" lengthAdjust="spacingAndGlyphs">Opacity Mask</text>
<text x="863.49" y="414.16" font-size="10.3" fill="#404040" font-weight="normal" font-style="normal" textLength="34.83" lengthAdjust="spacingAndGlyphs">Normal</text>
<text x="863.49" y="436.23" font-size="10.3" fill="#404040" font-weight="normal" font-style="normal" textLength="38.53" lengthAdjust="spacingAndGlyphs">Tangent</text>
<text x="863.49" y="458.30" font-size="10.3" fill="#404040" font-weight="normal" font-style="normal" textLength="100.53" lengthAdjust="spacingAndGlyphs">World Position Offset</text>
<text x="863.49" y="480.37" font-size="10.3" fill="#404040" font-weight="normal" font-style="normal" textLength="94.13" lengthAdjust="spacingAndGlyphs">World Displacement</text>
<text x="863.49" y="502.44" font-size="10.3" fill="#404040" font-weight="normal" font-style="normal" textLength="106.33" lengthAdjust="spacingAndGlyphs">Tessellation Multiplier</text>
<text x="863.49" y="524.51" font-size="10.3" fill="#404040" font-weight="normal" font-style="normal" textLength="80.93" lengthAdjust="spacingAndGlyphs">Subsurface Color</text>
<text x="863.49" y="546.58" font-size="10.3" fill="#404040" font-weight="normal" font-style="normal" textLength="70.13" lengthAdjust="spacingAndGlyphs">Custom Data 0</text>
<text x="863.49" y="568.65" font-size="10.3" fill="#404040" font-weight="normal" font-style="normal" textLength="68.23" lengthAdjust="spacingAndGlyphs">Custom Data 1</text>
<text x="863.49" y="590.72" font-size="10.3" fill="#404040" font-weight="normal" font-style="normal" textLength="89.83" lengthAdjust="spacingAndGlyphs">Ambient Occlusion</text>
<text x="863.49" y="612.79" font-size="10.3" fill="#404040" font-weight="normal" font-style="normal" textLength="49.43" lengthAdjust="spacingAndGlyphs">Refraction</text>
<text x="863.49" y="634.86" font-size="10.3" fill="#404040" font-weight="normal" font-style="normal" textLength="86.43" lengthAdjust="spacingAndGlyphs">Pixel Depth Offset</text>
<text x="863.49" y="656.93" font-size="10.3" fill="#404040" font-weight="normal" font-style="normal" textLength="69.53" lengthAdjust="spacingAndGlyphs">Shading Model</text>
<path d="M1005.4,661 L1016.5,661 L1022.6,691 L1016.8,691 L1013.5,673.5 L1013.5,691 L1005.4,691Z" fill="#ffffff" opacity="0.26"/>
</svg>
</body></html>
